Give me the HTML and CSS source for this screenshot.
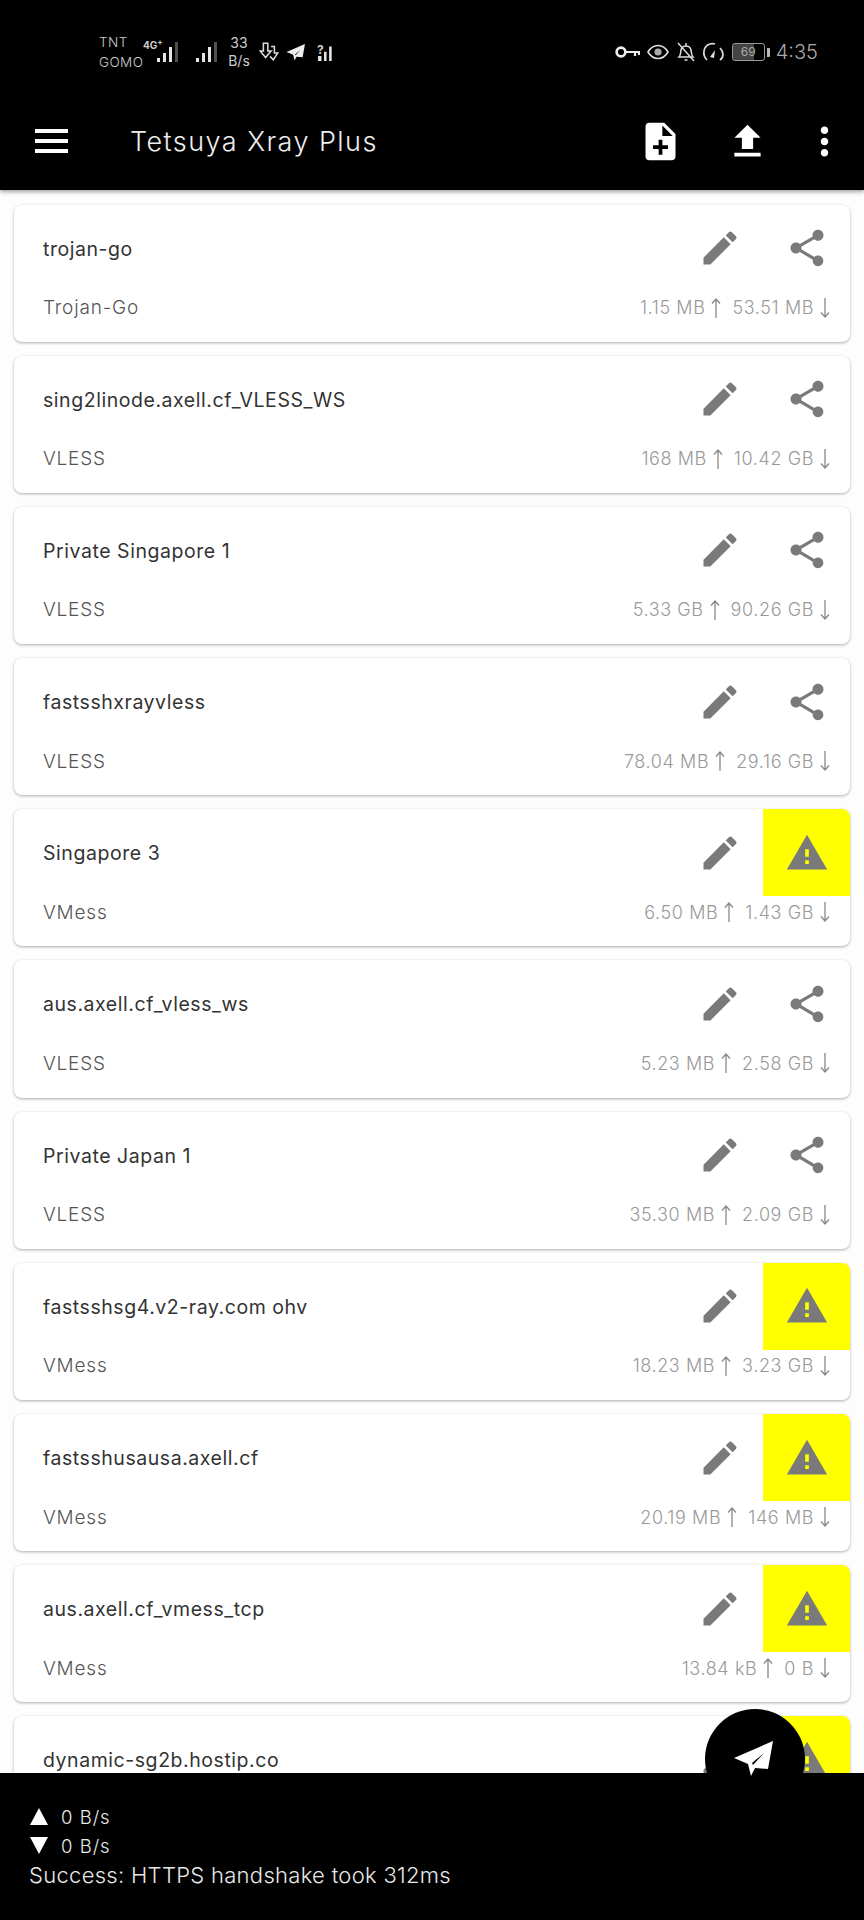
FILE: index.html
```html
<!DOCTYPE html>
<html lang="en">
<head>
  <meta charset="UTF-8" />
  <meta name="viewport" content="width=device-width, initial-scale=1.0"/>
  <title>Tetsuya Xray Plus</title>
  <link rel="stylesheet" href="styles.css">
</head>
<body>
  <svg class="defs" width="0" height="0">
    <symbol id="edit" viewBox="0 0 24 24"><path d="M3 17.25V21h3.75L17.81 9.94l-3.75-3.75L3 17.25zM20.71 7.04c.39-.39.39-1.02 0-1.41l-2.34-2.34c-.39-.39-1.02-.39-1.41 0l-1.83 1.83 3.75 3.75 1.83-1.83z"/></symbol>
    <symbol id="share" viewBox="0 0 24 24"><path d="M18 16.08c-.76 0-1.44.3-1.96.77L8.91 12.7c.05-.23.09-.46.09-.7s-.04-.47-.09-.7l7.05-4.11c.54.5 1.25.81 2.04.81 1.66 0 3-1.34 3-3s-1.34-3-3-3-3 1.34-3 3c0 .24.04.47.09.7L8.04 9.81C7.5 9.31 6.79 9 6 9c-1.66 0-3 1.34-3 3s1.34 3 3 3c.79 0 1.5-.31 2.04-.81l7.12 4.16c-.05.21-.08.43-.08.65 0 1.61 1.31 2.92 2.92 2.92s2.92-1.31 2.92-2.92-1.31-2.92-2.92-2.92z"/></symbol>
    <symbol id="warning" viewBox="0 0 24 24"><path d="M1 21h22L12 2 1 21zm12-3h-2v-2h2v2zm0-4h-2v-4h2v4z"/></symbol>
    <symbol id="up" viewBox="0 0 10 20"><path d="M5 20V1M1 5.5 5 1l4 4.5" fill="none" stroke="currentColor" stroke-width="1.3"/></symbol>
    <symbol id="down" viewBox="0 0 10 20"><path d="M5 0v19M1 14.5 5 19l4-4.5" fill="none" stroke="currentColor" stroke-width="1.3"/></symbol>
    <symbol id="plane" viewBox="0 0 40 36"><path d="M39 0 0 17l14 6 3 12 4-8 13 1zM19 24l11-12-12 10z" fill-rule="evenodd"/></symbol>
    <symbol id="bars" viewBox="0 0 21 20"><path d="M0 16h3v4H0zM6 11h3v9H6zM12 5h3v15h-3z"/><path d="M18 0h3v20h-3z" opacity=".35"/></symbol>
  </svg>

  <div class="page">
    <header class="top">
      <div class="status">
        <div class="status-left">
          <div class="carrier"><span>TNT</span><span>GOMO</span></div>
          <span class="net">4G<sup>+</sup></span>
          <svg class="bars bars-a"><use href="#bars"/></svg>
          <svg class="bars bars-b"><use href="#bars"/></svg>
          <div class="speed"><span>33</span><span>B/s</span></div>
          <svg class="mini mini-dl" viewBox="0 0 20 18" fill="none" stroke="#ddd" stroke-width="1.4"><path d="M4 1h4v7h3l-5 6-5-6h3zM11 4h3v6h3l-4 6-3-3"/></svg>
          <svg class="mini mini-plane"><use href="#plane"/></svg>
          <div class="wifi"><span>?</span><svg class="bars bars-c" viewBox="0 0 21 20"><path d="M0 14h4v6H0zM7 9h3v11H7zM13 3h3v17h-3z"/></svg></div>
        </div>
        <div class="status-right">
          <svg class="sys sys-key" viewBox="0 0 25 14" fill="none" stroke="#eee" stroke-width="2.6"><circle cx="6" cy="7" r="4.4"/><path d="M10 7h15M20 7v4M24 7v3" stroke-width="2.2"/></svg>
          <svg class="sys sys-eye" viewBox="0 0 22 16" fill="none" stroke="#ddd" stroke-width="1.6"><path d="M1 8c5-8.600 15-8.600 20 0-5 8.600-15 8.600-20 0z"/><circle cx="11" cy="8" r="3.600" fill="#aaa" stroke="none"/></svg>
          <svg class="sys sys-bell" viewBox="0 0 18 20" fill="none" stroke="#ddd" stroke-width="1.5"><path d="M2 15c2-2 1.500-5 2-7 .6-2.500 2.500-4 5-4s4.400 1.500 5 4c.5 2 0 5 2 7zM9 1v3M7.500 18h3M1 1l16 18"/></svg>
          <svg class="sys sys-gauge" viewBox="0 0 23 20" fill="none" stroke="#ddd" stroke-width="1.7"><path d="M5 18C0 13 1 4 8 2c2-.6 3.500-.4 5 0M18 6c4 4 4 9 0 12"/><path d="M8 15l5-7-1 8z" fill="#ddd" stroke="none"/></svg>
          <div class="battery"><div class="battery-cell"><span>69</span></div><div class="battery-tip"></div></div>
          <span class="clock">4:35</span>
        </div>
      </div>
      <div class="toolbar">
        <div class="burger"><i></i><i></i><i></i></div>
        <h1 class="app-title">Tetsuya Xray Plus</h1>
        <svg class="tool tool-add" viewBox="0 0 24 24"><path d="M14 2H6c-1.100 0-1.990.9-1.990 2L4 20c0 1.100.89 2 1.990 2H18c1.100 0 2-.9 2-2V8l-6-6zm2 14h-3v3h-2v-3H8v-2h3v-3h2v3h3v2zm-3-7V3.500L18.500 9H13z"/></svg>
        <svg class="tool tool-up" viewBox="0 0 24 24"><path d="M9 16h6v-6h4l-7-7-7 7h4zm-4 2h14v2H5z"/></svg>
        <svg class="tool tool-more" viewBox="0 0 24 24"><path d="M12 8c1.100 0 2-.9 2-2s-.9-2-2-2-2 .9-2 2 .9 2 2 2zm0 2c-1.100 0-2 .9-2 2s.9 2 2 2 2-.9 2-2-.9-2-2-2zm0 6c-1.100 0-2 .9-2 2s.9 2 2 2 2-.9 2-2-.9-2-2-2z"/></svg>
      </div>
    </header>

    <main class="list">
      <article class="card">
        <div class="card-top">
          <span class="name">trojan-go</span>
          <div class="action"><svg class="icon"><use href="#edit"/></svg></div>
          <div class="action"><svg class="icon"><use href="#share"/></svg></div>
        </div>
        <div class="card-bottom">
          <span class="type">Trojan-Go</span>
          <div class="traffic"><span>1.15 MB</span><svg class="arrow"><use href="#up"/></svg><span class="rx">53.51 MB</span><svg class="arrow"><use href="#down"/></svg></div>
        </div>
      </article>
      <article class="card">
        <div class="card-top">
          <span class="name">sing2linode.axell.cf_VLESS_WS</span>
          <div class="action"><svg class="icon"><use href="#edit"/></svg></div>
          <div class="action"><svg class="icon"><use href="#share"/></svg></div>
        </div>
        <div class="card-bottom">
          <span class="type">VLESS</span>
          <div class="traffic"><span>168 MB</span><svg class="arrow"><use href="#up"/></svg><span class="rx">10.42 GB</span><svg class="arrow"><use href="#down"/></svg></div>
        </div>
      </article>
      <article class="card">
        <div class="card-top">
          <span class="name">Private Singapore 1</span>
          <div class="action"><svg class="icon"><use href="#edit"/></svg></div>
          <div class="action"><svg class="icon"><use href="#share"/></svg></div>
        </div>
        <div class="card-bottom">
          <span class="type">VLESS</span>
          <div class="traffic"><span>5.33 GB</span><svg class="arrow"><use href="#up"/></svg><span class="rx">90.26 GB</span><svg class="arrow"><use href="#down"/></svg></div>
        </div>
      </article>
      <article class="card">
        <div class="card-top">
          <span class="name">fastsshxrayvless</span>
          <div class="action"><svg class="icon"><use href="#edit"/></svg></div>
          <div class="action"><svg class="icon"><use href="#share"/></svg></div>
        </div>
        <div class="card-bottom">
          <span class="type">VLESS</span>
          <div class="traffic"><span>78.04 MB</span><svg class="arrow"><use href="#up"/></svg><span class="rx">29.16 GB</span><svg class="arrow"><use href="#down"/></svg></div>
        </div>
      </article>
      <article class="card">
        <div class="card-top">
          <span class="name">Singapore 3</span>
          <div class="action"><svg class="icon"><use href="#edit"/></svg></div>
          <div class="action action-warn"><svg class="icon"><use href="#warning"/></svg></div>
        </div>
        <div class="card-bottom">
          <span class="type">VMess</span>
          <div class="traffic"><span>6.50 MB</span><svg class="arrow"><use href="#up"/></svg><span class="rx">1.43 GB</span><svg class="arrow"><use href="#down"/></svg></div>
        </div>
      </article>
      <article class="card">
        <div class="card-top">
          <span class="name">aus.axell.cf_vless_ws</span>
          <div class="action"><svg class="icon"><use href="#edit"/></svg></div>
          <div class="action"><svg class="icon"><use href="#share"/></svg></div>
        </div>
        <div class="card-bottom">
          <span class="type">VLESS</span>
          <div class="traffic"><span>5.23 MB</span><svg class="arrow"><use href="#up"/></svg><span class="rx">2.58 GB</span><svg class="arrow"><use href="#down"/></svg></div>
        </div>
      </article>
      <article class="card">
        <div class="card-top">
          <span class="name">Private Japan 1</span>
          <div class="action"><svg class="icon"><use href="#edit"/></svg></div>
          <div class="action"><svg class="icon"><use href="#share"/></svg></div>
        </div>
        <div class="card-bottom">
          <span class="type">VLESS</span>
          <div class="traffic"><span>35.30 MB</span><svg class="arrow"><use href="#up"/></svg><span class="rx">2.09 GB</span><svg class="arrow"><use href="#down"/></svg></div>
        </div>
      </article>
      <article class="card">
        <div class="card-top">
          <span class="name">fastsshsg4.v2-ray.com ohv</span>
          <div class="action"><svg class="icon"><use href="#edit"/></svg></div>
          <div class="action action-warn"><svg class="icon"><use href="#warning"/></svg></div>
        </div>
        <div class="card-bottom">
          <span class="type">VMess</span>
          <div class="traffic"><span>18.23 MB</span><svg class="arrow"><use href="#up"/></svg><span class="rx">3.23 GB</span><svg class="arrow"><use href="#down"/></svg></div>
        </div>
      </article>
      <article class="card">
        <div class="card-top">
          <span class="name">fastsshusausa.axell.cf</span>
          <div class="action"><svg class="icon"><use href="#edit"/></svg></div>
          <div class="action action-warn"><svg class="icon"><use href="#warning"/></svg></div>
        </div>
        <div class="card-bottom">
          <span class="type">VMess</span>
          <div class="traffic"><span>20.19 MB</span><svg class="arrow"><use href="#up"/></svg><span class="rx">146 MB</span><svg class="arrow"><use href="#down"/></svg></div>
        </div>
      </article>
      <article class="card">
        <div class="card-top">
          <span class="name">aus.axell.cf_vmess_tcp</span>
          <div class="action"><svg class="icon"><use href="#edit"/></svg></div>
          <div class="action action-warn"><svg class="icon"><use href="#warning"/></svg></div>
        </div>
        <div class="card-bottom">
          <span class="type">VMess</span>
          <div class="traffic"><span>13.84 kB</span><svg class="arrow"><use href="#up"/></svg><span class="rx">0 B</span><svg class="arrow"><use href="#down"/></svg></div>
        </div>
      </article>
      <article class="card">
        <div class="card-top">
          <span class="name">dynamic-sg2b.hostip.co</span>
          <div class="action"><svg class="icon"><use href="#edit"/></svg></div>
          <div class="action action-warn"><svg class="icon"><use href="#warning"/></svg></div>
        </div>
      </article>
    </main>

    <footer class="bottom">
      <div class="rate"><span class="tri tri-up"></span><span>0 B/s</span></div>
      <div class="rate"><span class="tri tri-down"></span><span>0 B/s</span></div>
      <div class="message">Success: HTTPS handshake took 312ms</div>
    </footer>

    <div class="fab"><svg class="fab-icon"><use href="#plane"/></svg></div>
  </div>
</body>
</html>
```

FILE: styles.css
```css
* {
  margin: 0;
  padding: 0;
  box-sizing: border-box;
}
body {
  font-family: 'Inter', 'Liberation Sans', sans-serif;
  background: #000;
}
.defs {
  position: absolute;
}
.page {
  position: relative;
  width: 864px;
  height: 1920px;
  display: flex;
  flex-direction: column;
  overflow: hidden;
  background: #fdfdfd;
}

/* top */
.top {
  flex: none;
  height: 190px;
  background: #000;
  color: #fff;
  box-shadow: 0 2px 4px rgba(0, 0, 0, 0.35);
  position: relative;
  z-index: 1;
}
.status {
  height: 92px;
  padding: 12px 46px 0 99px;
  display: flex;
  justify-content: space-between;
  align-items: center;
  color: #ccc;
}
.status-left, .status-right {
  display: flex;
  align-items: center;
}
.carrier {
  width: 44px;
  display: flex;
  flex-direction: column;
  gap: 5px;
  font-size: 13.500px;
  line-height: 15px;
  font-weight: 300;
  letter-spacing: 0.4px;
}
.net {
  width: 14px;
  margin-top: -14px;
  font-size: 10px;
  font-weight: 700;
  line-height: 12px;
  white-space: nowrap;
}
.net sup {
  font-size: 8px;
  line-height: 0;
}
.bars {
  fill: #e6e6e6;
}
.bars-a {
  width: 21px;
  height: 20px;
}
.bars-b {
  width: 21px;
  height: 20px;
  margin-left: 18px;
}
.speed {
  width: 26px;
  margin-left: 9px;
  display: flex;
  flex-direction: column;
  align-items: center;
  font-size: 14px;
  line-height: 16px;
  gap: 2px;
}
.mini-dl {
  width: 22px;
  height: 20px;
  margin-left: 7px;
}
.mini-plane {
  width: 20px;
  height: 17px;
  margin-left: 5px;
  fill: #eee;
}
.wifi {
  display: flex;
  align-items: flex-end;
  margin-left: 11px;
  position: relative;
  width: 20px;
  height: 17px;
}
.wifi span {
  position: absolute;
  left: 0;
  top: -2px;
  font-size: 12px;
  font-weight: 700;
}
.bars-c {
  width: 20px;
  height: 17px;
}
.sys-key {
  width: 25px;
  height: 14px;
}
.sys-eye {
  width: 22px;
  height: 16px;
  margin-left: 7px;
}
.sys-bell {
  width: 18px;
  height: 20px;
  margin-left: 8px;
}
.sys-gauge {
  width: 23px;
  height: 20px;
  margin-left: 7px;
}
.battery {
  margin-left: 7px;
  display: flex;
  align-items: center;
  gap: 2px;
}
.battery-cell {
  width: 33px;
  height: 18px;
  border: 1px solid #999;
  border-radius: 3px;
  background: linear-gradient(90deg, #444 69%, transparent 69%);
  text-align: center;
  font-size: 12px;
  line-height: 16px;
  color: #aaa;
}
.battery-tip {
  width: 3px;
  height: 9px;
  background: #bbb;
  border-radius: 0 1px 1px 0;
}
.clock {
  margin-left: 6px;
  font-size: 20px;
  font-weight: 300;
  color: #aaa;
}
.toolbar {
  height: 98px;
  padding: 0 17px 0 35px;
  display: flex;
  align-items: center;
}
.burger {
  width: 33px;
  display: flex;
  flex-direction: column;
  gap: 6px;
}
.burger i {
  display: block;
  height: 4px;
  background: #fff;
}
.app-title {
  flex: 1;
  margin-left: 62px;
  font-size: 27px;
  font-weight: 300;
  letter-spacing: 1.45px;
  color: #eee;
}
.tool {
  width: 45px;
  height: 45px;
  fill: #fff;
}
.tool-up {
  margin-left: 42px;
}
.tool-more {
  margin-left: 32px;
}

/* list */
.list {
  flex: 1;
  min-height: 0;
  overflow: hidden;
  padding: 14.500px 14px 0;
  display: flex;
  flex-direction: column;
  gap: 14px;
}
.card {
  flex: none;
  height: 137.2px;
  background: #fff;
  border-radius: 8px;
  box-shadow: 0 1px 3px rgba(0, 0, 0, 0.32);
}
.card-top {
  height: 87px;
  display: flex;
  align-items: center;
}
.name {
  flex: 1;
  padding-left: 29px;
  padding-top: 1px;
  font-size: 19.500px;
  color: #333;
  letter-spacing: 0.55px;
}
.action {
  width: 87px;
  height: 87px;
  display: flex;
  align-items: center;
  justify-content: center;
}
.action-warn {
  background: #ff0;
  border-radius: 0 8px 0 0;
}
.icon {
  width: 44px;
  height: 44px;
  fill: #7a7a7a;
}
.card-bottom {
  height: 32px;
  padding: 0 20px 0 29px;
  display: flex;
  justify-content: space-between;
  align-items: center;
}
.type {
  font-size: 19px;
  font-weight: 300;
  color: #555;
  letter-spacing: 0.8px;
}
.traffic {
  display: flex;
  align-items: center;
  font-size: 18px;
  font-weight: 300;
  letter-spacing: 0.6px;
  color: #999;
}
.arrow {
  width: 10px;
  height: 20px;
  margin-left: 6px;
  color: #888;
}
.rx {
  margin-left: 11px;
}

/* bottom */
.bottom {
  flex: none;
  height: 147px;
  padding: 29px 29px 0;
  background: #000;
  color: #e8e8e8;
  position: relative;
  z-index: 1;
}
.rate {
  height: 29px;
  display: flex;
  align-items: center;
  gap: 13px;
  padding-left: 1px;
  font-size: 18.500px;
  font-weight: 300;
  letter-spacing: 1px;
}
.tri {
  width: 0;
  height: 0;
  border-left: 9.500px solid transparent;
  border-right: 9.500px solid transparent;
}
.tri-up {
  border-bottom: 17px solid #fff;
}
.tri-down {
  border-top: 17px solid #fff;
}
.message {
  margin-top: 2px;
  font-size: 22px;
  font-weight: 300;
  letter-spacing: 0.3px;
}
.fab {
  position: absolute;
  right: 59px;
  bottom: 111px;
  width: 100px;
  height: 100px;
  border-radius: 50%;
  background: #000;
  display: flex;
  align-items: center;
  justify-content: center;
  z-index: 2;
}
.fab-icon {
  width: 40px;
  height: 36px;
  margin-left: -3px;
  fill: #fff;
}
```
